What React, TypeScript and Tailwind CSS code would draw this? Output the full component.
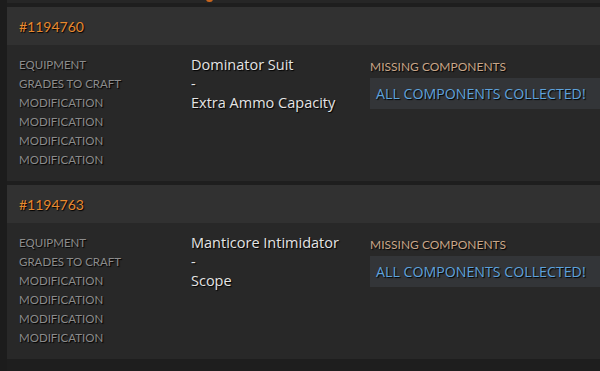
const orders = [
  {
    id: "#1194760",
    equipment: "Dominator Suit",
    grades: "-",
    mods: ["Extra Ammo Capacity"],
  },
  {
    id: "#1194763",
    equipment: "Manticore Intimidator",
    grades: "-",
    mods: ["Scope"],
  },
];

const labels = [
  "Equipment",
  "Grades to craft",
  "Modification",
  "Modification",
  "Modification",
  "Modification",
];

function OrderCard({ order }: { order: (typeof orders)[number] }) {
  return (
    <div className="bg-[#282828]">
      <div className="flex h-[38px] items-center bg-[#313131] px-3">
        <span className="text-[14px] text-[#e8892e] [text-shadow:1px_1px_1px_#000]">{order.id}</span>
      </div>
      <div className="flex px-3 pt-[10px] pb-[12px]">
        <div className="w-[172px] shrink-0">
          {labels.map((label, i) => (
            <div
              key={i}
              className="h-[19px] text-[11.5px] uppercase leading-[19px] text-[#8c8c8c] [text-shadow:1px_1px_1px_#000]"
            >
              {label}
            </div>
          ))}
        </div>
        <div className="w-[179px] shrink-0 font-['Open_Sans',sans-serif] text-[14.5px] leading-[19px] text-[#e4e4e4] [text-shadow:1px_1px_1px_#000]">
          <div className="h-[19px]">{order.equipment}</div>
          <div className="h-[19px]">{order.grades}</div>
          {order.mods.map((m, i) => (
            <div key={i} className="h-[19px]">
              {m}
            </div>
          ))}
        </div>
        <div className="min-w-0 flex-1 pt-[3px]">
          <div className="h-[20px] whitespace-nowrap text-[12px] uppercase leading-[18px] text-[#c9a688] [text-shadow:1px_1px_1px_#000]">
            Missing components
          </div>
          <div className="-mr-3 flex h-[31px] items-center bg-[#333538] px-[6px]">
            <span className="whitespace-nowrap font-['Open_Sans',sans-serif] text-[14.2px] uppercase text-[#5ea2dc] [text-shadow:1px_1px_1px_#000]">
              All components collected!
            </span>
          </div>
        </div>
      </div>
    </div>
  );
}

export default function App() {
  return (
    <div
      className="flex h-[371px] w-[600px] overflow-hidden bg-[#1e1e1e]"
      style={{ fontFamily: "Lato, 'Liberation Sans', sans-serif" }}
    >
      <div className="w-[7px] shrink-0 bg-[#1c1c1c]" />
      <div className="flex flex-1 flex-col gap-[4px]">
        <div className="relative h-[3px] bg-[#262626]">
          <div className="absolute left-[199px] top-[-4px] h-[6px] w-[7px] rounded-full bg-[#c8651e]" />
        </div>
        <OrderCard order={orders[0]} />
        <OrderCard order={orders[1]} />
      </div>
    </div>
  );
}
